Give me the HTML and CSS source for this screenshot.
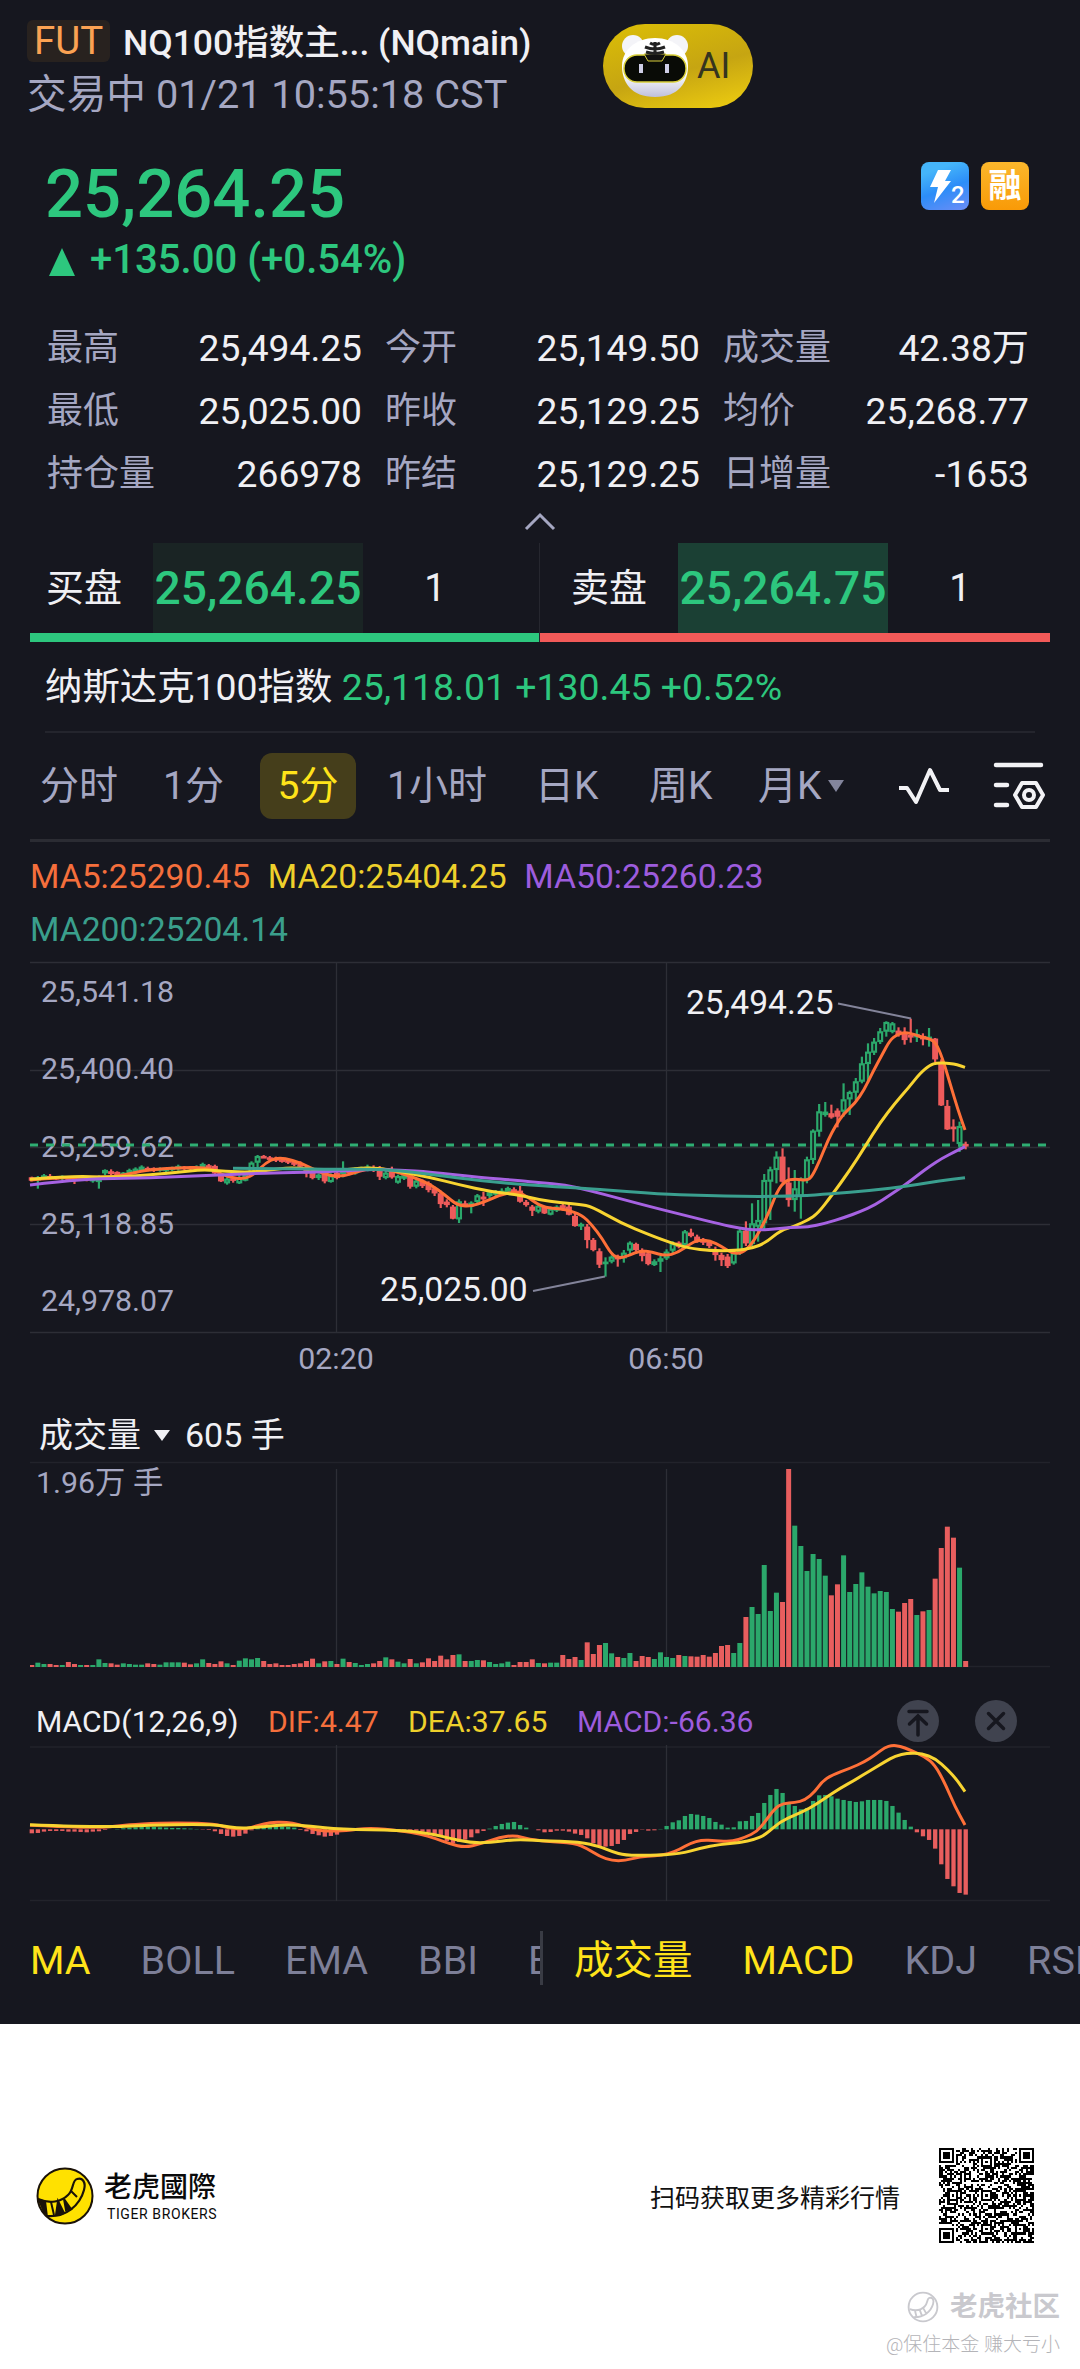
FILE: index.html
```html
<!DOCTYPE html>
<html lang="zh-CN">
<head>
  <meta charset="utf-8">
  <title>NQ100指数主连 (NQmain)</title>
  <link rel="stylesheet" href="styles.css">
</head>
<body>
  <div class="app">
    <header class="header">
      <div class="header-info">
        <div class="header-title"><span class="badge">FUT</span><h1>NQ100指数主... (NQmain)</h1></div>
        <div class="header-status">交易中 01/21 10:55:18 CST</div>
      </div>
      <div class="ai-button">
        <svg width="74" height="68" viewBox="0 0 74 68">
          <defs>
            <linearGradient id="fur" x1="0" y1="0" x2="0" y2="1">
              <stop offset="0.6" stop-color="#fff"/>
              <stop offset="1" stop-color="#bfc0da"/>
            </linearGradient>
          </defs>
          <circle cx="14" cy="14" r="11" fill="#f4f4f8"/>
          <circle cx="58" cy="14" r="11" fill="#f4f4f8"/>
          <path d="M36 6C55 6 69 18 69 34C69 50 60 65 36 65C12 65 3 50 3 34C3 18 17 6 36 6Z" fill="url(#fur)"/>
          <rect x="5" y="23" width="62" height="27" rx="13" fill="#090b06" stroke="#d8cf3a" stroke-width="1.5"/>
          <path d="M25 22H47L43 29H29Z" fill="#111" stroke="#d8cf3a"/>
          <path d="M31 11Q36 14 41 11M26 15Q36 19 46 15M27 20Q36 23 45 20M36 10V23" fill="none" stroke="#222" stroke-width="3"/>
          <path d="M22 32V41M48 32V41" stroke="#cfcfe6" stroke-width="4"/>
        </svg>
        <span>AI</span>
      </div>
    </header>

    <section class="quote">
      <div>
        <div class="price">25,264.25</div>
        <div class="change"><i class="up"></i>+135.00 (+0.54%)</div>
      </div>
      <div class="tags">
        <div class="tag tag-blue">
          <svg width="48" height="48" viewBox="0 0 48 48">
            <path d="M17 8H30L24 19H30L13 41L17 25H9Z" fill="#fff"/>
            <text x="30" y="41" class="tag-level">2</text>
          </svg>
        </div>
        <div class="tag tag-orange">融</div>
      </div>
    </section>

    <section class="stats">
      <span>最高</span><b>25,494.25</b><span>今开</span><b>25,149.50</b><span>成交量</span><b>42.38万</b>
      <span>最低</span><b>25,025.00</b><span>昨收</span><b>25,129.25</b><span>均价</span><b>25,268.77</b>
      <span>持仓量</span><b>266978</b><span>昨结</span><b>25,129.25</b><span>日增量</span><b>-1653</b>
    </section>
    <div class="collapse">
      <svg width="36" height="22" viewBox="0 0 36 22"><path d="M4 18L18 4L32 18" fill="none" stroke="#a5a7c2" stroke-width="3"/></svg>
    </div>

    <section class="book">
      <div class="side buy"><span>买盘</span><b>25,264.25</b><em>1</em></div>
      <div class="side sell"><span>卖盘</span><b>25,264.75</b><em>1</em></div>
    </section>

    <section class="index">纳斯达克100指数 <span>25,118.01 +130.45 +0.52%</span></section>

    <nav class="periods">
      <span>分时</span>
      <span>1分</span>
      <span class="active">5分</span>
      <span>1小时</span>
      <span>日K</span>
      <span>周K</span>
      <span class="more">月K<svg width="16" height="12"><path d="M0 0H16L8 12Z" fill="#83859c"/></svg></span>
      <svg width="52" height="40" viewBox="0 0 52 40"><path d="M1 22H9L18 36L32 4L42 24H51" fill="none" stroke="#f2f2f5" stroke-width="4" stroke-linejoin="round"/></svg>
      <svg width="52" height="50" viewBox="0 0 52 50" fill="none" stroke="#f2f2f5" stroke-width="4.5" stroke-linecap="round">
        <path d="M3 4H48M3 24H14M3 44H14"/>
        <path d="M29 22H43L50 34L43 46H29L22 34Z" stroke-width="4" stroke-linejoin="round"/>
        <circle cx="36" cy="34" r="5" stroke-width="4"/>
      </svg>
    </nav>

    <div class="ma-legend">
      <span class="c-orange">MA5:25290.45</span><span class="c-yellow">MA20:25404.25</span><span class="c-purple">MA50:25260.23</span><span class="c-teal">MA200:25204.14</span>
    </div>
    <svg class="chart" id="priceChart" width="1080" height="424" viewBox="0 16 1080 424"></svg>

    <div class="volume-head">成交量<i class="down"></i>605 手</div>
    <svg class="chart" id="volumeChart" width="1080" height="218" viewBox="0 82 1080 218"></svg>

    <div class="macd-head">
      <div class="macd-values">
        <span>MACD(12,26,9)</span><span class="c-orange">DIF:4.47</span><span class="c-yellow">DEA:37.65</span><span class="c-purple">MACD:-66.36</span>
      </div>
      <svg width="120" height="44" viewBox="0 0 120 44" fill="none" stroke="#16171f" stroke-width="3.5" stroke-linecap="round">
        <circle cx="21" cy="22" r="21" fill="#40434f" stroke="none"/>
        <path d="M12 12.500H30M21 36V18M12.500 25L21 17L29.500 25"/>
        <circle cx="99" cy="22" r="21" fill="#40434f" stroke="none"/>
        <path d="M91.500 14.500L106.500 29.500M106.500 14.500L91.500 29.500"/>
      </svg>
    </div>
    <svg class="chart" id="macdChart" width="1080" height="161" viewBox="0 64 1080 161"></svg>

    <nav class="indicators">
      <div class="main-indicators"><span class="active">MA</span><span>BOLL</span><span>EMA</span><span>BBI</span><span>E</span></div>
      <div class="sub-indicators"><span class="active">成交量</span><span class="active">MACD</span><span>KDJ</span><span>RSI</span></div>
    </nav>
  </div>

  <footer class="footer">
    <div class="share">
      <svg width="60" height="60" viewBox="0 0 60 60">
        <circle cx="30" cy="30" r="27.500" fill="#ffe100" stroke="#1a1208" stroke-width="2"/>
        <path d="M3 33C15 38 26 36 33 29C39 24 37 14 42 13C48 11 51 17 49 24C45 39 31 52 11 50" fill="none" stroke="#1a1208" stroke-width="2.200"/>
        <path d="M2 32L11 35L13 51L8 46Z" fill="#1a1208"/>
        <path d="M16 36L19 49M23 35L29 47L21 49ZM29 33L36 43L31 44ZM36 25L42 31" fill="#1a1208" stroke="#1a1208" stroke-width="2"/>
      </svg>
      <div class="brand"><strong>老虎國際</strong><small>TIGER BROKERS</small></div>
      <p>扫码获取更多精彩行情</p>
      <svg id="qr" width="95" height="95" viewBox="0 0 45 45" shape-rendering="crispEdges"></svg>
    </div>
    <div class="watermark">
      <div class="community">
        <svg width="32" height="32" viewBox="0 0 60 60" fill="none" stroke="#c9c9ce" stroke-width="3.500">
          <circle cx="30" cy="30" r="27"/>
          <path d="M5 34C16 38 26 36 33 29C39 24 37 14 42 13C48 11 51 17 49 24C45 39 31 50 12 49M15 37L18 49M24 36L28 46M31 33L36 42"/>
        </svg>
        老虎社区
      </div>
      <div class="author">@保住本金 赚大亏小</div>
    </div>
  </footer>
  <script src="charts.js"></script>
</body>
</html>
```
FILE: styles.css
```css
body {
  margin: 0;
  width: 1080px;
  background: #fff;
  font-family: Roboto, "Noto Sans CJK SC", sans-serif;
}

svg {
  display: block;
  flex-shrink: 0;
}

b, em, i {
  font-weight: 400;
  font-style: normal;
}

.app {
  height: 2024px;
  background: #16171f;
  color: #f0f0f4;
  overflow: hidden;
}

.c-orange { color: #f56f3c; }
.c-yellow { color: #eed02b; }
.c-purple { color: #9d5cdd; }
.c-teal { color: #3a9f8c; }

/* header */
.header {
  display: flex;
  height: 114px;
  padding: 20px 0 0 27px;
}

.header-info {
  width: 576px;
}

.header-title {
  display: flex;
  gap: 13px;
  height: 51px;
}

.badge {
  width: 83px;
  height: 42px;
  line-height: 42px;
  border-radius: 6px;
  background: #28221f;
  color: #fba253;
  font-size: 38.5px;
  text-align: center;
}

.header h1 {
  margin: 0;
  font-size: 35.5px;
  line-height: 47px;
  font-weight: 500;
  white-space: nowrap;
}

.header-status {
  color: #a5a7c2;
  font-size: 39.7px;
  line-height: 48px;
}

.ai-button {
  display: flex;
  align-items: center;
  gap: 4px;
  box-sizing: border-box;
  width: 150px;
  height: 84px;
  margin-top: 4px;
  padding-left: 16px;
  border-radius: 42px;
  background: linear-gradient(165deg, #d8ba08 10%, #c6a512 55%, #f0cf10);
  color: #35351f;
  font-size: 36px;
}

/* last price */
.quote {
  display: flex;
  justify-content: space-between;
  height: 183px;
  padding: 0 51px 0 45px;
}

.price {
  padding-top: 19px;
  color: #2dc77e;
  font-size: 67px;
  font-weight: 500;
  line-height: 82px;
}

.change {
  display: flex;
  align-items: center;
  color: #2dc77e;
  font-size: 40.1px;
  font-weight: 500;
  line-height: 50px;
}

.up {
  margin: 3px 15px 0 4px;
  border: 13px solid transparent;
  border-top: 0;
  border-bottom: 28px solid #2dc77e;
}

.tags {
  display: flex;
  gap: 12px;
  padding-top: 28px;
}

.tag {
  width: 48px;
  height: 48px;
  border-radius: 8px;
  color: #fff;
  font-size: 33px;
  font-weight: 700;
  line-height: 47px;
  text-align: center;
}

.tag-level {
  fill: #fff;
  font-size: 24px;
  font-weight: 500;
}

.tag-blue { background: linear-gradient(160deg, #45b5fa 20%, #2c8df8 55%, #6d8df6); }
.tag-orange { background: linear-gradient(#fbb72c, #f99a07); }

/* quote details */
.stats {
  display: grid;
  grid-template-columns: 120px 195px 143px 195px 143px 186px;
  grid-auto-rows: 63px;
  padding-left: 47px;
  font-size: 36px;
  line-height: 63px;
}

.stats span { color: #a5a7c2; }
.stats span:nth-child(6n + 3), .stats span:nth-child(6n + 5) { padding-left: 23px; }

.stats b {
  font-size: 37.2px;
  text-align: right;
}

.collapse {
  display: flex;
  justify-content: center;
  height: 32px;
  padding-top: 5px;
}

.book {
  display: flex;
  margin: 0 30px;
}

.side {
  display: flex;
  box-sizing: border-box;
  width: 510px;
  height: 99px;
  padding-left: 16px;
  border-bottom: 9px solid #2dc77e;
  font-size: 38px;
  line-height: 91px;
}

.side span { width: 107px; }

.side b {
  width: 210px;
  background: #1a2424;
  color: #2dc77e;
  font-size: 46.2px;
  font-weight: 500;
  text-align: center;
}

.side em {
  width: 144px;
  text-align: center;
}

.sell {
  border-bottom-color: #f25a58;
  box-shadow: -1px 0 #26272f;
  padding-left: 31px;
}

.sell b { background: #1b4034; }

.index {
  margin: 0 45px;
  border-bottom: 2px solid #24252d;
  font-size: 37.4px;
  line-height: 91px;
  height: 89px;
}

.index span { color: #2dc77e; }

/* chart period tabs */
.periods {
  display: grid;
  grid-template-columns: 123px 97px 127px 148px 114px 109px 140px 95px 52px;
  align-items: center;
  height: 106px;
  margin: 0 30px;
  padding-left: 10px;
  border-bottom: 3px solid #2b2c33;
  color: #a5a7c2;
  font-size: 39px;
  line-height: 70px;
  white-space: nowrap;
}

.periods .active {
  width: 96px;
  height: 66px;
  border-radius: 12px;
  background: #453e1b;
  color: #ffe31a;
  text-align: center;
  line-height: 67px;
}

.periods .more {
  display: flex;
  align-items: center;
  gap: 7px;
}

.ma-legend {
  display: flex;
  flex-wrap: wrap;
  column-gap: 17.5px;
  height: 106px;
  padding: 8px 260px 0 30px;
  font-size: 33.7px;
  line-height: 53px;
}

.chart {
  overflow: visible;
}

.chart text { font-size: 30.3px; fill: #a5a7c2; }
.chart .mark { font-size: 33.6px; fill: #f0f0f4; }

.grid { stroke: #2d2e36; stroke-width: 1.3; }
.grid-soft { stroke: #22232b; stroke-width: 1.3; }
.leader { stroke: #83849a; stroke-width: 2; }
.last { stroke: #2fae73; stroke-width: 3; stroke-dasharray: 8 8; }
.line { fill: none; stroke-width: 3; stroke-linejoin: round; }
.ma5 { stroke: #ff7038; }
.ma20 { stroke: #f8d431; }
.ma50 { stroke: #a662e2; }
.ma200 { stroke: #3a9f8f; }

.rise { fill: #2ba86b; }
.fall { fill: #e85e5e; }
.candle-rise { fill: #16171f; stroke: #2ba86b; stroke-width: 2.2; }
.candle-fall { fill: #ee5b5b; stroke: #ee5b5b; stroke-width: 2.2; }

.volume-head {
  display: flex;
  align-items: center;
  height: 54px;
  padding: 28px 0 0 39px;
  font-size: 34px;
  line-height: 54px;
}

.down {
  margin: 0 15px 0 13px;
  border: 8px solid transparent;
  border-top: 11px solid #f0f0f4;
  border-bottom: 0;
}

.macd-head {
  display: flex;
  justify-content: space-between;
  height: 45px;
  padding: 19px 63px 0 36px;
}

.macd-values {
  display: flex;
  gap: 29.5px;
  padding-top: 1px;
  font-size: 30.1px;
  line-height: 44px;
}

/* indicator tabs */
.indicators {
  display: flex;
  height: 106px;
  align-items: center;
  color: #7d7f98;
  font-size: 39.5px;
  line-height: 54px;
  white-space: nowrap;
}

.indicators .active { color: #ffe31a; }

.main-indicators, .sub-indicators {
  display: flex;
  gap: 50px;
  height: 51px;
  padding-top: 3px;
  overflow: hidden;
}

.main-indicators {
  box-sizing: border-box;
  width: 513px;
  height: 54px;
  margin-left: 30px;
  border-right: 3px solid #393b44;
}

.sub-indicators {
  flex: 1;
  padding-left: 31px;
}

/* share footer */
.footer {
  height: 345px;
}

.share {
  display: flex;
  align-items: center;
  height: 95px;
  padding: 124px 46px 0 35px;
}

.brand {
  display: flex;
  flex: 1;
  flex-direction: column;
  padding: 2px 0 0 9px;
  color: #0a0a0a;
}

.brand strong {
  font-size: 28px;
  font-weight: 500;
  line-height: 34px;
}

.brand small {
  padding-left: 3px;
  font-size: 14px;
  line-height: 18px;
  letter-spacing: 0.6px;
}

.share p {
  margin: 0 39px 0 0;
  color: #111;
  font-size: 25px;
}

.watermark {
  display: flex;
  flex-direction: column;
  align-items: flex-end;
  padding: 45px 20px 0 0;
  color: #c9c9ce;
}

.community {
  display: flex;
  align-items: center;
  gap: 11px;
  font-size: 27.5px;
  font-weight: 700;
  line-height: 38px;
}

.author {
  padding-top: 4px;
  color: #b4b4b8;
  font-size: 19px;
  font-weight: 300;
  line-height: 30px;
}
```
FILE: charts.js
```js
var STEP = 6.104;
var FIRST = 31.75;
var COLORS = 'rggrrgrrgrgggrrggggrrggggrrggrrrgrggggrrrrrrrrrgrgrgrgggrrgrggrgrrrrrrgrggrggggrrrrgrggrrrgrrrggrggrrrggggrgrrrrrrrggrgggggrrggggggrrgggggggggrrrgrgrrrrgrr';

// all vertical values below are thirds of a pixel
var volume = [
  6,13,9,9,6,6,15,9,6,6,6,23,12,11,7,11,9,7,7,11,9,7,14,14,14,13,8,11,23,12,9,17,11,6,19,26,23,27,18,9,
  11,6,6,9,11,18,25,11,17,18,9,25,15,12,6,9,11,18,29,23,16,11,24,11,14,26,18,34,23,36,38,18,18,21,20,15,9,11,16,6,
  15,15,23,12,11,13,13,36,24,30,21,74,39,66,72,41,30,27,42,18,33,30,24,44,30,27,36,33,32,31,36,31,42,63,66,42,72,150,180,159,
  306,168,223,195,594,424,363,288,339,324,274,215,248,335,225,249,284,241,221,228,225,174,166,192,204,156,167,171,265,357,421,388,298,18
];

// high, body top, body bottom, low
var candles = [
  [710,712,722,724],[708,712,722,746],[702,706,716,720],[702,708,714,718],[708,710,718,720],[706,708,714,720],[708,712,718,722],[710,712,720,732],
  [712,714,718,722],[712,714,718,724],[708,712,724,728],[706,710,726,746],[688,690,700,706],[688,694,702,706],[694,696,708,712],[696,698,704,710],
  [686,690,700,704],[682,686,696,700],[676,680,690,694],[680,684,690,694],[682,684,692,696],[682,685,692,695],[684,686,692,704],[680,683,690,693],
  [674,678,688,692],[678,680,686,690],[678,680,688,692],[676,680,688,690],[668,672,684,688],[672,676,686,690],[674,678,700,704],[700,702,724,726],
  [712,716,730,734],[712,715,722,728],[706,712,730,732],[700,704,722,724],[664,668,700,704],[645,648,668,684],[645,648,652,654],[648,652,658,662],
  [650,654,662,666],[654,658,664,668],[656,660,668,672],[660,664,674,678],[664,670,680,686],[675,686,700,712],[690,694,714,718],[700,704,714,720],
  [696,700,724,730],[700,706,726,728],[694,698,714,718],[664,686,702,712],[684,688,700,706],[682,684,700,704],[680,682,692,696],[674,680,690,694],
  [676,682,692,696],[678,686,710,720],[690,698,714,718],[680,688,712,716],[704,708,728,731],[700,706,716,720],[702,706,740,746],[718,722,740,745],
  [718,722,738,744],[724,730,750,757],[740,745,760,768],[752,760,792,804],[778,785,795,802],[795,800,836,838],[778,784,838,849],[782,790,796,800],
  [784,788,800,820],[762,766,786,795],[756,770,778,798],[752,757,768,774],[750,755,764,770],[745,752,762,766],[740,744,756,760],[742,748,758,762],
  [738,752,785,788],[780,786,795,800],[795,800,812,828],[792,797,815,820],[798,800,820,822],[800,806,824,826],[796,800,812,816],[792,796,806,812],
  [790,800,824,826],[820,828,858,860],[848,852,858,870],[852,860,900,925],[894,900,930,934],[925,934,974,984],[952,965,972,1010],[946,950,965,970],
  [944,948,958,980],[930,938,955,968],[904,908,932,945],[908,912,930,935],[925,930,948,964],[932,940,972,976],[958,964,975,978],[948,955,965,996],
  [928,935,955,960],[904,910,932,940],[904,908,920,925],[870,874,915,920],[866,878,888,892],[884,890,902,908],[894,898,908,915],[900,906,918,924],
  [920,930,945,962],[938,945,960,978],[942,950,978,984],[930,938,970,974],[864,872,938,945],[844,872,910,918],[790,850,912,918],[780,840,860,905],
  [702,720,850,870],[680,688,725,840],[634,650,690,730],[625,650,725,728],[682,728,780,800],[690,745,780,815],[712,715,770,836],[650,658,720,730],
  [568,572,660,672],[492,514,575,590],[486,515,525,530],[494,520,532,536],[505,512,530,562],[430,478,515,530],[452,456,478,525],[414,424,458,480],
  [350,370,425,430],[310,335,372,428],[294,305,338,345],[264,274,306,312],[244,246,275,290],[246,250,276,280],[262,272,285,290],[262,280,300,314],
  [236,285,292,308],[268,282,292,306],[280,288,298,316],[264,290,300,320],[294,296,358,368],[358,370,496,498],[480,498,568,570],[538,560,566,605],
  [545,558,612,636],[605,612,618,628]
];

// positive values grow up
var histogram = [
  -12,-11,-7,-5,-5,-5,-7,-7,-8,-9,-7,-6,-2,0,1,3,5,6,7,7,7,6,5,4,4,3,2,1,-1,-2,-6,-14,-20,-22,-20,-13,-3,4,9,9,
  8,8,7,5,-2,-6,-14,-18,-22,-20,-16,-8,-2,1,3,4,2,-1,-1,-1,-2,-3,-3,-4,-7,-10,-14,-22,-35,-42,-38,-31,-24,-12,-5,2,10,16,20,22,
  13,5,0,-3,-9,-8,-4,-4,-7,-13,-17,-27,-42,-50,-52,-50,-44,-32,-14,-8,-1,-4,-3,1,10,21,27,40,46,44,40,34,22,14,5,6,24,25,40,49,
  79,103,121,109,78,70,60,64,85,102,103,99,92,88,85,82,84,88,88,88,85,70,50,28,8,-9,-21,-32,-58,-105,-149,-171,-191,-196
];

var ma5 = [30,720,60,712,105,712,125,705,146,690,180,683,205,682,215,692,228,712,245,718,255,700,266,668,275,655,285,655,300,668,315,690,330,708,345,708,360,692,375,684,390,690,410,708,430,732,445,765,457,795,470,800,485,785,500,765,515,755,525,765,540,798,552,805,565,808,582,825,592,855,602,895,612,945,620,955,630,945,640,932,652,936,665,948,678,938,690,912,698,900,710,902,722,920,732,940,742,940,752,912,762,860,770,810,777,755,785,722,795,716,807,722,812,710,820,660,828,600,836,555,844,520,855,490,864,450,873,395,882,345,890,300,897,284,905,276,915,284,922,292,930,296,936,310,942,350,950,430,958,510,965,570];
var ma20 = [30,718,70,708,110,712,150,705,190,693,205,689,225,694,250,697,270,690,290,682,310,688,340,692,360,684,378,684,400,695,430,712,460,735,490,755,520,765,540,780,560,788,580,793,592,800,620,848,650,885,672,910,690,925,710,932,735,932,752,925,766,908,780,872,795,858,808,840,818,820,832,765,850,690,865,620,880,548,895,490,908,445,920,400,930,375,937,368,950,370,957,374,965,382];
var ma50 = [30,735,60,724,100,716,150,714,200,707,250,701,280,698,330,695,370,688,400,690,430,696,480,712,520,722,540,728,565,735,590,752,620,776,650,800,690,830,720,852,740,865,755,870,775,868,790,862,808,862,825,850,845,832,860,815,875,795,890,765,905,735,918,705,930,678,942,655,955,635,965,620];
var ma200 = [233,685,280,686,340,688,380,688,410,695,460,715,500,728,540,737,600,748,660,762,700,766,750,770,800,768,830,762,870,752,910,738,940,722,965,713];
var dif = [30,436,60,440,100,443,120,438,140,431,180,428,215,432,228,444,245,448,258,436,270,428,285,426,300,434,315,450,330,454,345,452,370,443,400,452,420,462,435,475,450,492,465,502,480,492,500,472,515,466,530,478,545,484,575,490,587,505,600,530,612,542,625,542,640,530,655,528,668,522,680,508,690,490,702,480,715,482,732,485,745,472,757,455,765,425,775,385,783,370,795,368,805,360,815,335,822,305,832,285,850,265,865,245,875,225,885,202,892,196,900,198,910,210,925,230,935,255,945,310,955,380,965,435];
var dea = [30,434,100,442,150,435,200,433,220,436,240,446,260,441,285,434,310,438,340,448,400,450,430,460,450,475,470,488,490,488,515,478,540,482,580,486,600,500,612,515,625,526,650,526,680,522,700,505,720,493,740,488,755,478,765,465,780,425,795,405,810,385,825,355,840,325,855,300,870,272,885,245,895,228,908,219,922,221,935,235,948,270,957,300,965,335];

function line (cls, x1, y1, x2, y2) {
  return '<line class="' + cls + '" x1="' + x1 + '" y1="' + y1 + '" x2="' + x2 + '" y2="' + y2 + '"/>';
}

function rect (cls, x, y, w, h) {
  return '<rect class="' + cls + '" x="' + x + '" y="' + y + '" width="' + w + '" height="' + h + '"/>';
}

function label (cls, x, y, text, anchor) {
  return '<text class="' + cls + '" x="' + x + '" y="' + y + '" text-anchor="' + (anchor || 'start') + '">' + text + '</text>';
}

// smooth curve through the midpoints of the given points
function curve (cls, p) {
  var d = 'M' + p[0] + ' ' + p[1] / 3;
  for (var i = 2; i < p.length - 2; i += 2) {
    d += 'Q' + p[i] + ' ' + p[i + 1] / 3 + ' ' + (p[i] + p[i + 2]) / 2 + ' ' + (p[i + 1] + p[i + 3]) / 6;
  }
  d += 'L' + p[i] + ' ' + p[i + 1] / 3;
  return '<path class="line ' + cls + '" d="' + d + '"/>';
}

function center (i) {
  return FIRST + STEP * i;
}

function drawPrice () {
  var out = '';
  [22.5, 130.5, 207.5, 284.5, 392.5].forEach(function (y) {
    out += line('grid', 30, y, 1050, y);
  });
  out += line('grid', 336.5, 22.5, 336.5, 392.5) + line('grid', 666.5, 22.5, 666.5, 392.5);
  ['25,541.18', '25,400.40', '25,259.62', '25,118.85', '24,978.07'].forEach(function (t, i) {
    out += label('', 41, 61.7 + i * 77.4, t);
  });
  out += line('last', 30, 205, 1047, 205);
  candles.forEach(function (c, i) {
    var cls = COLORS[i] === 'g' ? 'candle-rise' : 'candle-fall';
    var x = center(i);
    out += line(cls, x, c[0] / 3, x, c[3] / 3);
    out += rect(cls, x - 1.9, c[1] / 3 + 1, 3.8, Math.max((c[2] - c[1]) / 3 - 2, 0.5));
  });
  out += curve('ma5', ma5) + curve('ma20', ma20) + curve('ma50', ma50) + curve('ma200', ma200);
  out += label('mark', 686, 73.7, '25,494.25') + line('leader', 838, 63.5, 911, 78.5);
  out += label('mark', 380, 361, '25,025.00') + line('leader', 533, 351, 605, 336.5);
  out += label('', 336, 428.7, '02:20', 'middle') + label('', 666, 428.7, '06:50', 'middle');
  document.getElementById('priceChart').innerHTML = out;
}

function drawVolume () {
  var out = line('grid-soft', 30, 82.5, 1050, 82.5) + line('grid-soft', 30, 286.5, 1050, 286.5);
  out += line('grid', 336.5, 89, 336.5, 287) + line('grid', 666.5, 89, 666.5, 287);
  out += label('', 36, 113, '1.96万 手');
  volume.forEach(function (v, i) {
    var left = Math.max(center(i) - 2.5, 30);
    out += rect(COLORS[i] === 'g' ? 'rise' : 'fall', left, 287 - v / 3, center(i) + 2.5 - left, v / 3);
  });
  document.getElementById('volumeChart').innerHTML = out;
}

function drawMacd () {
  var out = line('grid-soft', 30, 67, 1050, 67) + line('grid-soft', 30, 220.5, 1050, 220.5);
  out += line('grid', 336.5, 65, 336.5, 221) + line('grid', 666.5, 65, 666.5, 221);
  histogram.forEach(function (v, i) {
    var h = Math.abs(v) / 3;
    out += rect(v > 0 ? 'rise' : 'fall', center(i) - 2.1, v > 0 ? 149.3 - h : 149.3, 4.3, h);
  });
  out += curve('ma5', dif) + curve('ma20', dea);
  document.getElementById('macdChart').innerHTML = out;
}

// version 7 code: 45 modules, finders in three corners, alignment marks at 6 / 22 / 38
function drawQr () {
  var seed = 20260121, out = '', marks = [[22, 6], [6, 22], [22, 22], [38, 22], [22, 38], [38, 38]];
  function ring (x, y, cx, cy, size) {
    var d = Math.max(Math.abs(x - cx), Math.abs(y - cy));
    return d > size ? -1 : d;
  }
  for (var y = 0; y < 45; y++) {
    for (var x = 0; x < 45; x++) {
      seed = (seed * 1103515245 + 12345) % 2147483648;
      var on = seed / 2147483648 < 0.5;
      if (x === 6 || y === 6) on = (x + y) % 2 === 0;
      marks.forEach(function (m) {
        var d = ring(x, y, m[0], m[1], 2);
        if (d >= 0) on = d !== 1;
      });
      [[3, 3], [41, 3], [3, 41]].forEach(function (m) {
        var d = ring(x, y, m[0], m[1], 4);
        if (d >= 0) on = d < 2 || d === 3;
      });
      if (on) out += rect('', x, y, 1, 1);
    }
  }
  document.getElementById('qr').innerHTML = out;
}

drawPrice();
drawVolume();
drawMacd();
drawQr();
```
